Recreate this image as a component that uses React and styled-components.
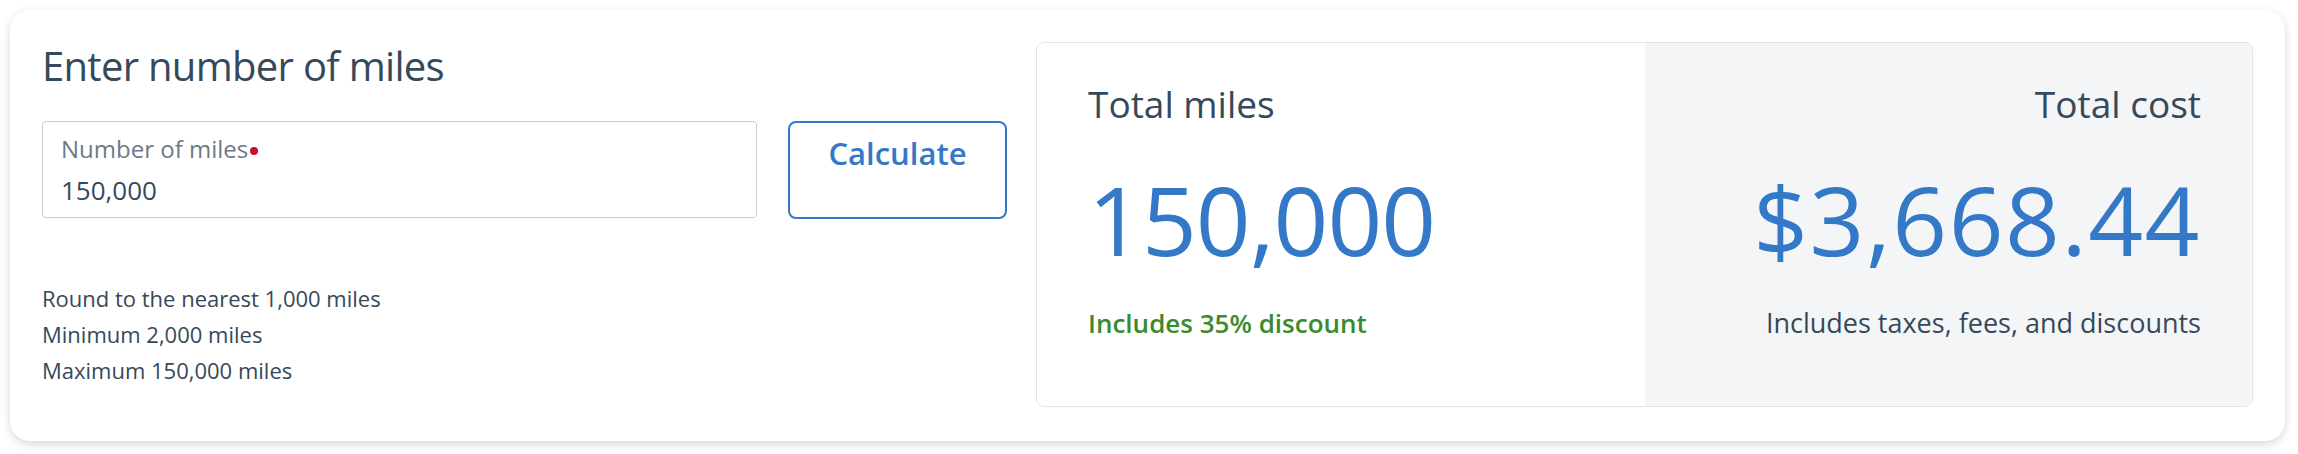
import React from 'react';
import styled, { createGlobalStyle } from 'styled-components';

const GlobalStyle = createGlobalStyle`
  html, body {
    margin: 0;
    padding: 0;
    background: #ffffff;
    font-family: 'Open Sans', 'Noto Sans', sans-serif;
  }
  * { box-sizing: border-box; }
`;

const Card = styled.div`
  margin: 10px 13px 12px 10px;
  padding: 32px 32px 34px 32px;
  background: #ffffff;
  border-radius: 20px;
  box-shadow: 0 3px 10px rgba(0, 0, 0, 0.16);
  display: grid;
  grid-template-columns: 965px 1fr;
  column-gap: 29px;
`;

const InputColumn = styled.div`
  display: flex;
  flex-direction: column;
`;

const Heading = styled.h2`
  margin: 0;
  font-size: 40px;
  line-height: 48px;
  font-weight: 400;
  letter-spacing: -0.7px;
  color: #36495a;
`;

const FormRow = styled.div`
  display: flex;
  gap: 31px;
  margin-top: 31px;
`;

const Field = styled.label`
  flex: 1;
  display: flex;
  flex-direction: column;
  height: 97px;
  padding: 13px 18px 11px 18px;
  border: 1px solid #c9ced3;
  border-radius: 4px;
`;

const FieldLabel = styled.span`
  font-size: 24px;
  line-height: 28px;
  color: #6b7a88;
`;

const Required = styled.span`
  display: inline-block;
  width: 8px;
  height: 8px;
  margin-left: 2px;
  border-radius: 50%;
  background: #c8102e;
  vertical-align: 3px;
`;

const FieldValue = styled.input`
  margin-top: 11px;
  padding: 0;
  border: none;
  outline: none;
  background: transparent;
  font-family: inherit;
  font-size: 26px;
  line-height: 32px;
  height: 32px;
  color: #36495a;
`;

const CalcButton = styled.button`
  width: 219px;
  height: 98px;
  padding: 12px 0 0 0;
  display: flex;
  justify-content: center;
  align-items: flex-start;
  border: 2px solid #3478c8;
  border-radius: 8px;
  background: #ffffff;
  color: #3478c8;
  font-family: inherit;
  font-size: 31px;
  line-height: 36px;
  font-weight: 600;
  cursor: pointer;
`;

const Hints = styled.ul`
  list-style: none;
  margin: 61px 0 0 0;
  padding: 0;
`;

const Hint = styled.li`
  font-size: 22px;
  line-height: 36px;
  color: #36495a;
`;

const Results = styled.div`
  display: grid;
  grid-template-columns: 1fr 1fr;
  border: 1px solid #e0e3e7;
  border-radius: 8px;
  overflow: hidden;
  height: 365px;
`;

const ResultCell = styled.div`
  display: flex;
  flex-direction: column;
  align-items: ${(p) => (p.$align === 'right' ? 'flex-end' : 'flex-start')};
  padding: 39px 51px 0 51px;
  background: ${(p) => (p.$shaded ? '#f4f5f7' : '#ffffff')};
`;

const ResultTitle = styled.div`
  font-size: 37px;
  line-height: 44px;
  color: #36495a;
`;

const ResultValue = styled.div`
  margin-top: 38px;
  font-size: 96px;
  line-height: 110px;
  color: #3478c8;
  letter-spacing: ${(p) => p.$spacing || '0px'};
`;

const ResultNote = styled.div`
  margin-top: 33px;
  font-size: ${(p) => (p.$accent ? '26px' : '27px')};
  line-height: 32px;
  font-weight: ${(p) => (p.$accent ? 600 : 400)};
  color: ${(p) => (p.$accent ? '#3c8a2e' : '#36495a')};
`;

export default function App() {
  return (
    <>
      <GlobalStyle />
      <Card>
        <InputColumn>
          <Heading>Enter number of miles</Heading>
          <FormRow>
            <Field>
              <FieldLabel>
                Number of miles
                <Required />
              </FieldLabel>
              <FieldValue defaultValue="150,000" />
            </Field>
            <CalcButton>Calculate</CalcButton>
          </FormRow>
          <Hints>
            <Hint>Round to the nearest 1,000 miles</Hint>
            <Hint>Minimum 2,000 miles</Hint>
            <Hint>Maximum 150,000 miles</Hint>
          </Hints>
        </InputColumn>
        <Results>
          <ResultCell>
            <ResultTitle>Total miles</ResultTitle>
            <ResultValue $spacing="-1px">150,000</ResultValue>
            <ResultNote $accent>Includes 35% discount</ResultNote>
          </ResultCell>
          <ResultCell $align="right" $shaded>
            <ResultTitle>Total cost</ResultTitle>
            <ResultValue $spacing="1.5px">$3,668.44</ResultValue>
            <ResultNote>Includes taxes, fees, and discounts</ResultNote>
          </ResultCell>
        </Results>
      </Card>
    </>
  );
}
